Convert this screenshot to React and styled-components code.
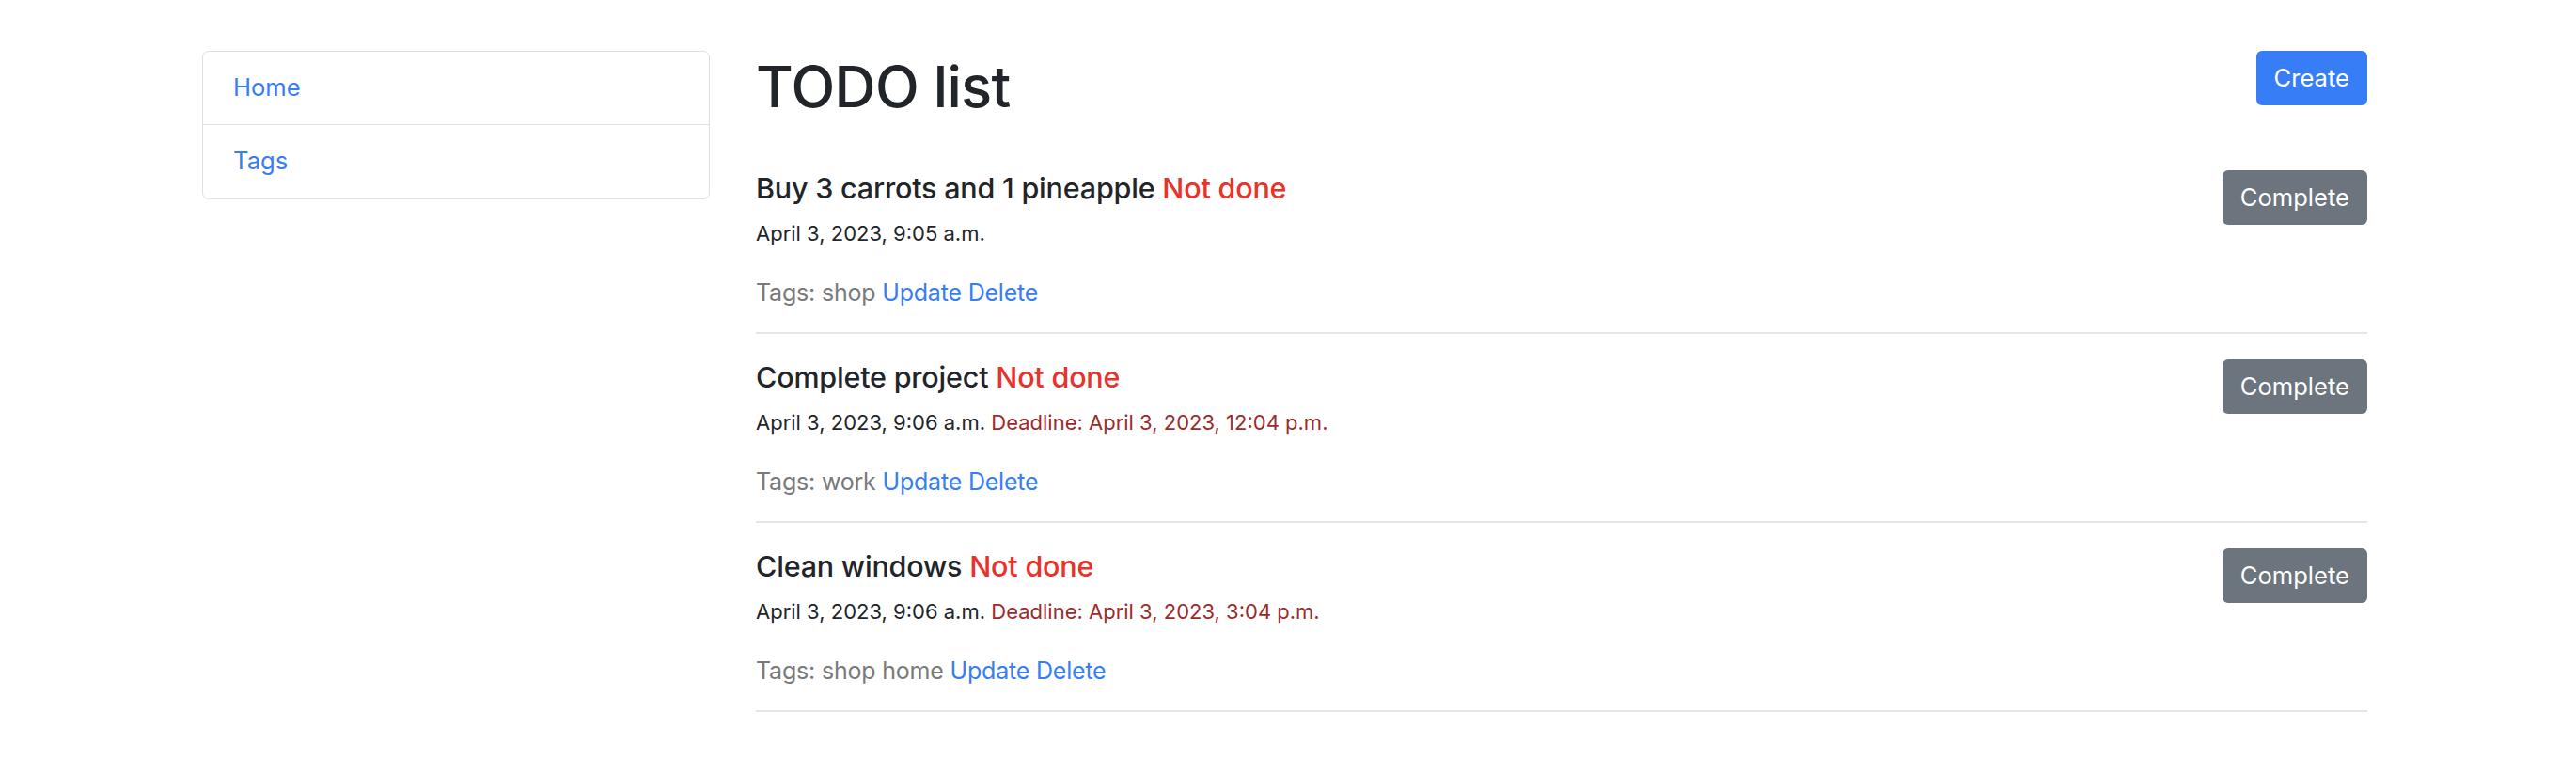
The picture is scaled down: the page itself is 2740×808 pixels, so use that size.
import styled, { createGlobalStyle } from "styled-components";

const GlobalStyle = createGlobalStyle`
  body {
    margin: 0;
    background: #fff;
    font-family: Inter, "Noto Sans", "Liberation Sans", sans-serif;
    color: #212529;
  }
`;

const Page = styled.div`
  display: grid;
  grid-template-columns: 540px 1fr;
  column-gap: 49px;
  padding: 54px 222px 0 215px;
  align-items: start;
`;

const SideNav = styled.nav`
  border: 1.5px solid #e0e0e0;
  border-radius: 7px;
  display: flex;
  flex-direction: column;
`;

const NavItem = styled.a`
  display: block;
  padding: 19px 32px 20px;
  font-size: 25.6px;
  line-height: 38.4px;
  color: #377df6;
  text-decoration: none;
  border-top: ${(p) => (p.$first ? "none" : "1.5px solid #e0e0e0")};
`;

const Header = styled.div`
  display: flex;
  justify-content: space-between;
  align-items: flex-start;
  margin-bottom: 23px;
`;

const Title = styled.h1`
  margin: 0;
  font-size: 61px;
  font-weight: 500;
  line-height: 77px;
  letter-spacing: -0.6px;
`;

const Button = styled.button`
  border: none;
  border-radius: 6px;
  color: #fff;
  font-family: inherit;
  font-size: 25.6px;
  line-height: 38.4px;
  padding: 10px 19px;
  background: ${(p) => (p.$variant === "primary" ? "#377df6" : "#6c757d")};
  cursor: pointer;
`;

const Item = styled.div`
  display: flex;
  justify-content: space-between;
  align-items: flex-start;
  padding: 27px 0 23px;
  border-bottom: 2px solid #e6e6e6;
`;

const ItemTitle = styled.h5`
  margin: 0 0 13px;
  font-size: 30.5px;
  font-weight: 500;
  line-height: 38px;
  letter-spacing: -0.2px;
`;

const NotDone = styled.span`
  color: #e8322a;
`;

const Dates = styled.div`
  font-size: 22px;
  line-height: 32px;
  margin-bottom: 28px;
`;

const Deadline = styled.span`
  color: #9c2b2b;
`;

const Meta = styled.div`
  font-size: 25px;
  line-height: 38px;
  letter-spacing: -0.2px;
  color: #7a7a7a;
`;

const Link = styled.a`
  color: #377df6;
  text-decoration: none;
`;

const todos = [
  { title: "Buy 3 carrots and 1 pineapple", created: "April 3, 2023, 9:05 a.m.", tags: "shop" },
  {
    title: "Complete project",
    created: "April 3, 2023, 9:06 a.m.",
    deadline: "April 3, 2023, 12:04 p.m.",
    tags: "work",
  },
  {
    title: "Clean windows",
    created: "April 3, 2023, 9:06 a.m.",
    deadline: "April 3, 2023, 3:04 p.m.",
    tags: "shop home",
  },
];

export default function App() {
  return (
    <>
      <GlobalStyle />
      <Page>
        <SideNav>
          <NavItem $first href="#">Home</NavItem>
          <NavItem href="#">Tags</NavItem>
        </SideNav>
        <main>
          <Header>
            <Title>TODO list</Title>
            <Button $variant="primary">Create</Button>
          </Header>
          {todos.map((t) => (
            <Item key={t.title}>
              <div>
                <ItemTitle>
                  {t.title} <NotDone>Not done</NotDone>
                </ItemTitle>
                <Dates>
                  {t.created}
                  {t.deadline && <Deadline> Deadline: {t.deadline}</Deadline>}
                </Dates>
                <Meta>
                  Tags: {t.tags} <Link href="#">Update</Link> <Link href="#">Delete</Link>
                </Meta>
              </div>
              <Button>Complete</Button>
            </Item>
          ))}
        </main>
      </Page>
    </>
  );
}
